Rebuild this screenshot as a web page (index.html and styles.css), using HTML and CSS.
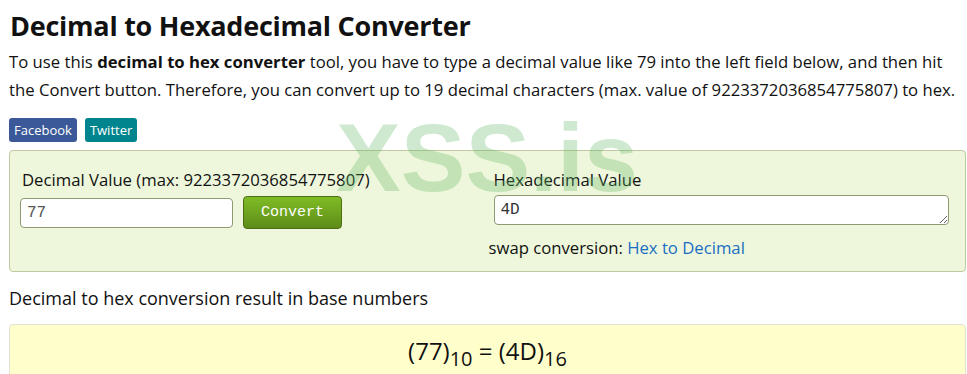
FILE: index.html
```html
<!DOCTYPE html>
<html lang="en">
<head>
    <meta charset="UTF-8">
    <meta name="viewport" content="width=device-width, initial-scale=1.0">
    <title>Decimal to Hexadecimal Converter</title>
    <link rel="stylesheet" href="styles.css">
</head>
<body>
    <h1 class="title">Decimal to Hexadecimal Converter</h1>
    <p class="intro">To use this <b>decimal to hex converter</b> tool, you have to type a decimal value like 79 into the left field below, and then hit the Convert button. Therefore, you can convert up to 19 decimal characters (max. value of 9223372036854775807) to hex.</p>

    <div class="share">
        <a class="btn-fb" href="#">Facebook</a>
        <a class="btn-tw" href="#">Twitter</a>
    </div>

    <div class="converter">
        <div class="col">
            <label class="lbl">Decimal Value (max: 9223372036854775807)</label>
            <div class="row">
                <input class="dec-input" type="text" value="77">
                <button class="convert">Convert</button>
            </div>
        </div>
        <div class="col">
            <label class="lbl">Hexadecimal Value</label>
            <textarea class="hex-output" rows="1">4D</textarea>
            <p class="swap">swap conversion: <a href="#">Hex to Decimal</a></p>
        </div>
    </div>

    <p class="result-title">Decimal to hex conversion result in base numbers</p>
    <div class="result">
        (77)<sub>10</sub> = (4D)<sub>16</sub>
    </div>

    <!-- watermark -->
    <div class="mark">XSS.is</div>
</body>
</html>
```

FILE: styles.css
```css
* {
    margin: 0;
    box-sizing: border-box;
}

body {
    padding: 8px 1px 0 9px;
    font-family: "Open Sans", "Noto Sans", Arial, sans-serif;
    font-size: 16.7px;
    color: #111;
    overflow: hidden;
}

.title {
    font-size: 27px;
    font-weight: 700;
    line-height: 36px;
    letter-spacing: -0.25px;
    padding-left: 1px;
}

.intro {
    margin-top: 4px;
    line-height: 28px;
}

.share {
    display: flex;
    gap: 8px;
    margin-top: 14px;
}

.share a {
    color: #fff;
    text-decoration: none;
    font-size: 13px;
    line-height: 24px;
    padding: 0 5px;
    border-radius: 3px;
}

.btn-fb {
    background: #3b5998;
}

.btn-tw {
    background: #00858e;
}

.converter {
    display: grid;
    grid-template-columns: 1fr 1fr;
    gap: 8px;
    margin-top: 8px;
    padding: 14px 10px 10px;
    background: #eef7db;
    border: 1px solid #bfc8a0;
    border-radius: 4px;
    height: 122px;
}

.lbl {
    display: block;
    line-height: 30px;
    margin-left: 2px;
}

.row {
    display: flex;
    align-items: center;
    gap: 10px;
    margin-top: 1px;
}

.dec-input {
    width: 213px;
    height: 30px;
    border: 1px solid #8d9a72;
    border-radius: 4px;
    padding: 0 6px;
    font-family: "Liberation Mono", "Courier New", monospace;
    font-size: 16px;
    color: #555;
}

.convert {
    width: 99px;
    height: 33px;
    border: 1px solid #4e6e16;
    border-radius: 4px;
    background: linear-gradient(#7fbc26, #5e8c18);
    color: #fff;
    font-family: "Liberation Mono", "Courier New", monospace;
    font-size: 15px;
}

.hex-output {
    display: block;
    width: calc(100% - 8px);
    height: 30px;
    margin: 0 0 0 2px;
    border: 1px solid #8d9a72;
    border-radius: 4px;
    padding: 5px 6px 0;
    font-family: "Liberation Mono", "Courier New", monospace;
    font-size: 16px;
    line-height: 18px;
    color: #333;
    resize: vertical;
    overflow: hidden;
}

.swap {
    margin-top: 8px;
    margin-left: -3px;
    line-height: 30px;
}

.swap a {
    color: #1a6fc4;
    text-decoration: none;
}

.result-title {
    margin-top: 14px;
    font-size: 18px;
    line-height: 24px;
}

.result {
    margin-top: 14px;
    height: 80px;
    padding-top: 9px;
    background: #ffffcc;
    border: 1px solid #e2e2d4;
    border-radius: 4px;
    text-align: center;
    font-size: 24px;
}

.result sub {
    font-size: 20px;
    vertical-align: -6px;
    line-height: 0;
}

.mark {
    position: absolute;
    left: 336px;
    top: 90px;
    font-family: "Liberation Sans", Arial, sans-serif;
    font-weight: 700;
    font-size: 97px;
    line-height: 1.4;
    color: rgba(95, 182, 98, 0.3);
    pointer-events: none;
}
```
